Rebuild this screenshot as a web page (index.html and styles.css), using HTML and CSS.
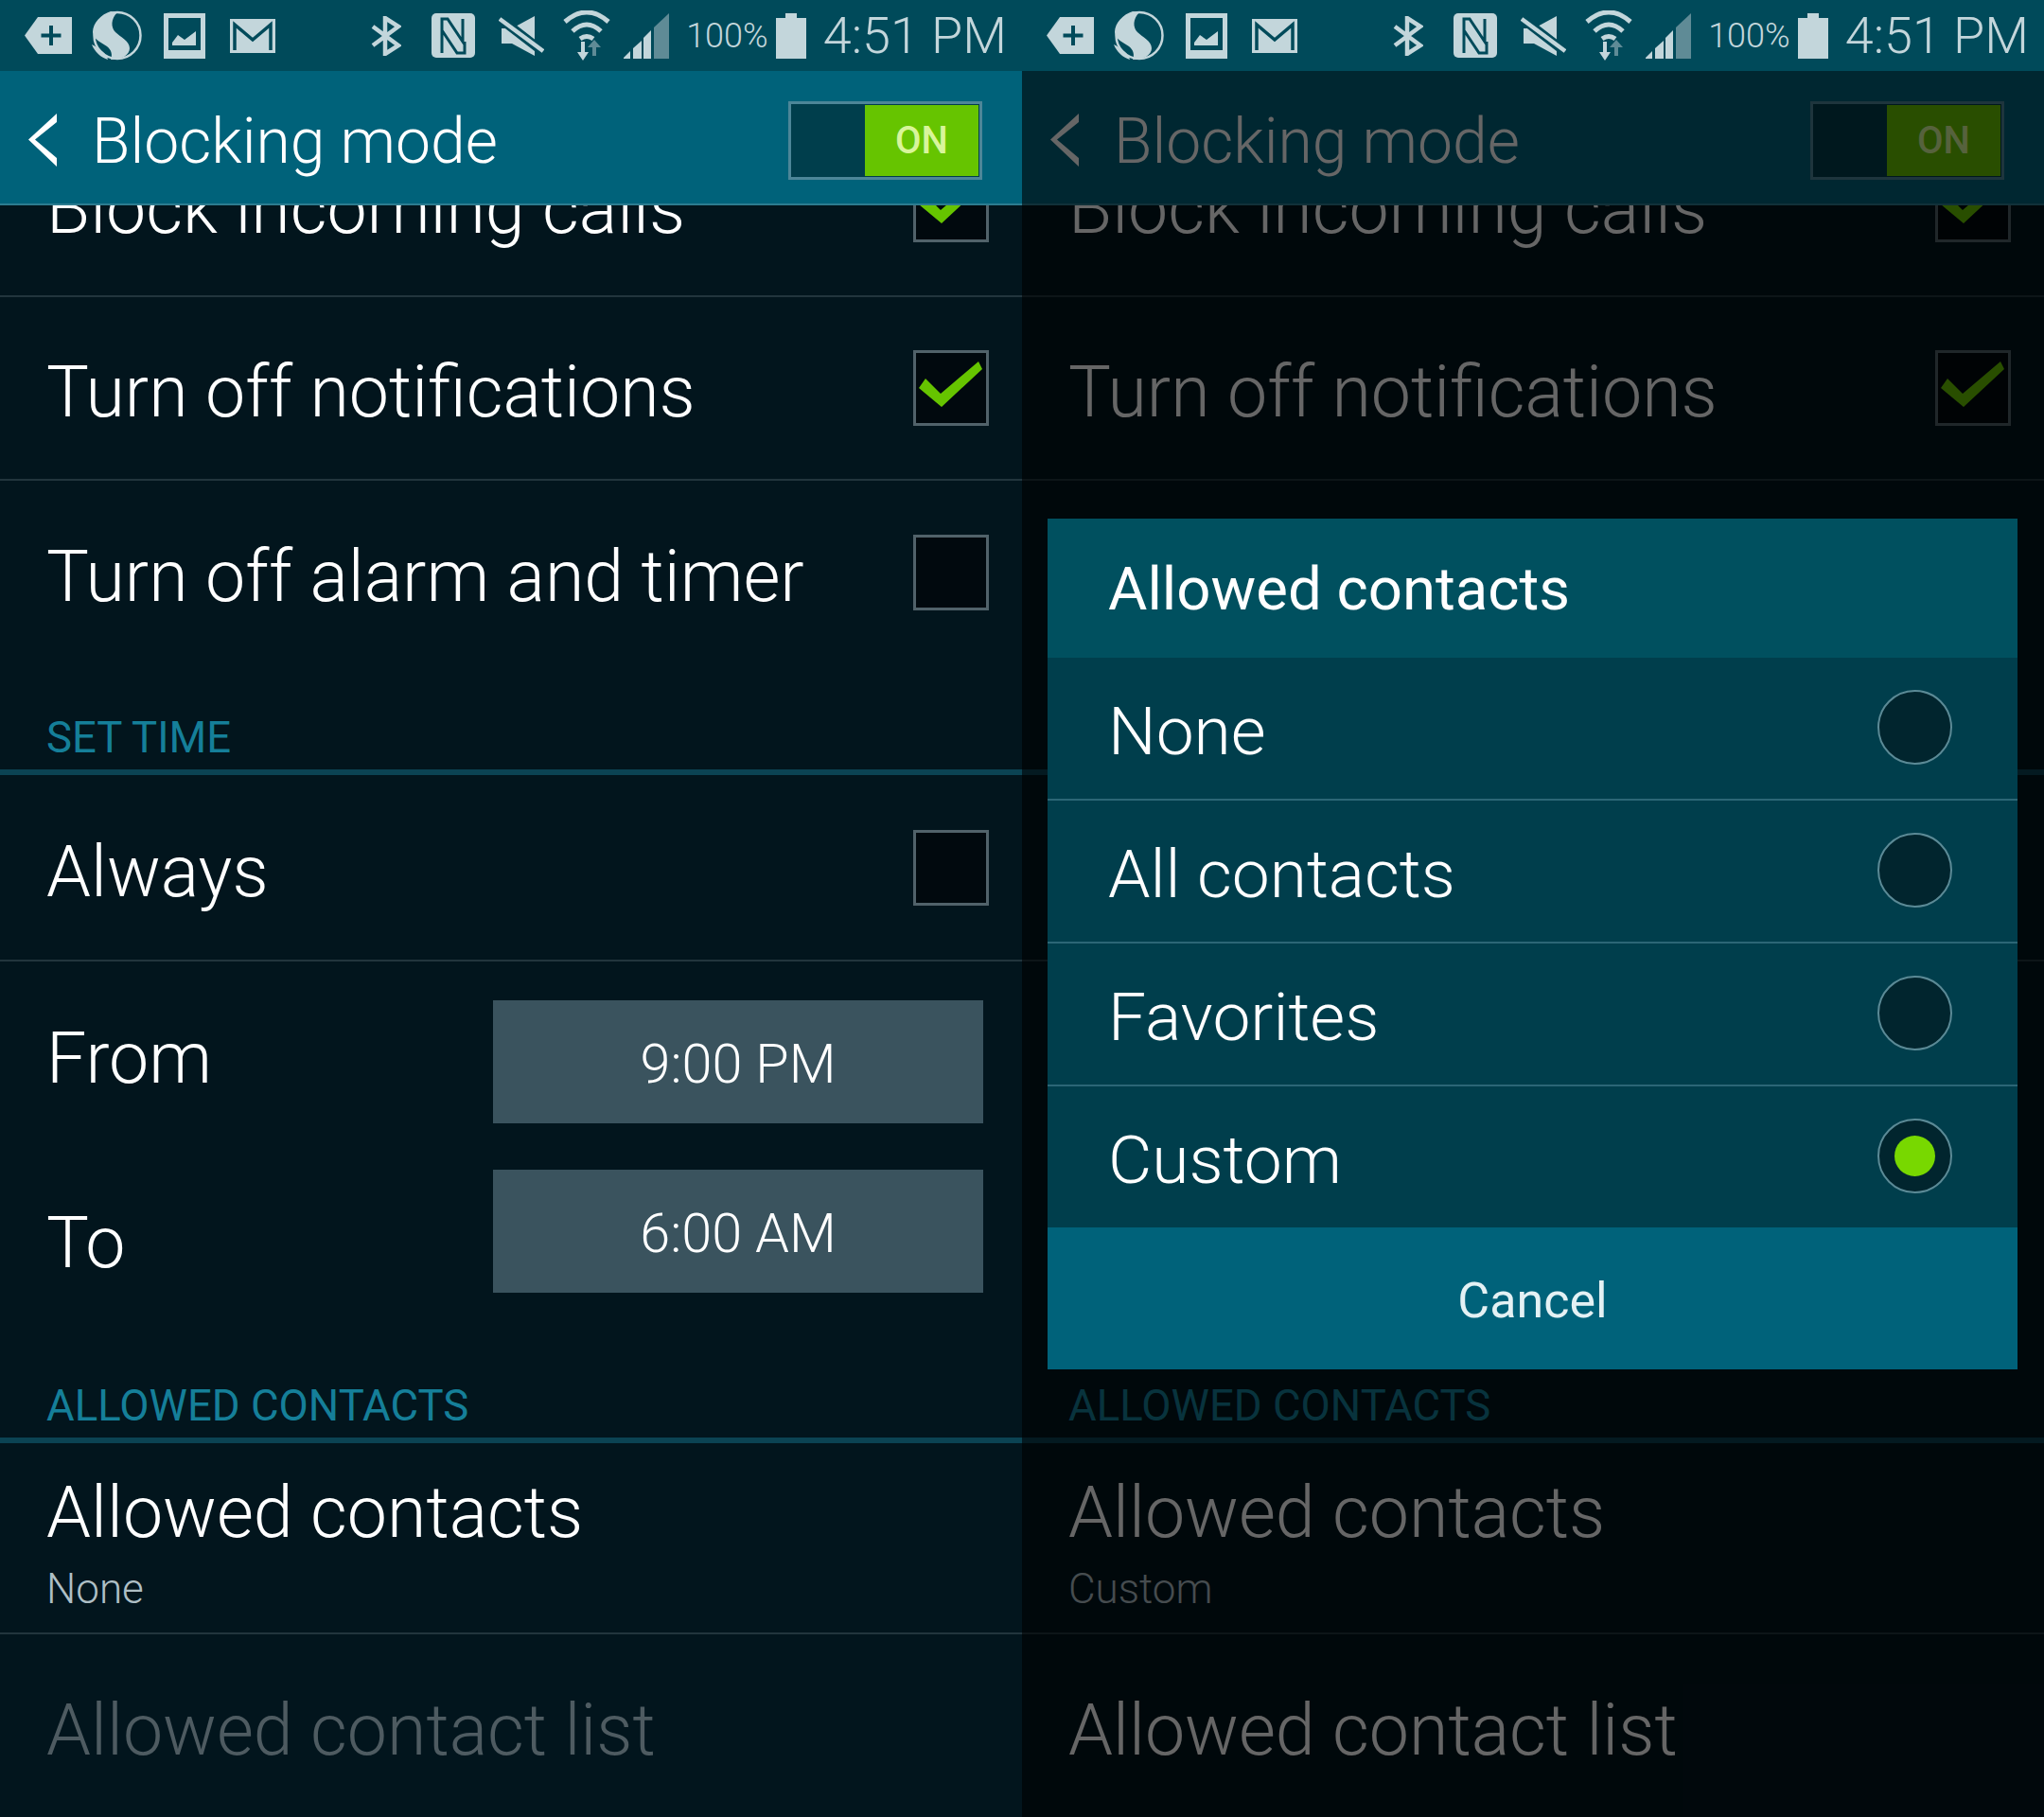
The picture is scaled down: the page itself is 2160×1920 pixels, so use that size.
FILE: index.html
```html
<!DOCTYPE html>
<html lang="en">
<head>
  <meta charset="UTF-8" />
  <title>Blocking mode</title>
  <link rel="stylesheet" href="styles.css">
</head>
<body>

  <!-- status bar icons, used by both phones -->
  <svg class="defs" xmlns="http://www.w3.org/2000/svg">
    <symbol id="i-tag" viewBox="0 0 50 39">
      <path d="M14 0H50V39H14L0 19.5Z" fill="currentColor"/>
      <path d="M26 9h4v8.500h8.500v4H30V30h-4v-8.500h-8.500v-4H26Z" fill="#004a5a"/>
    </symbol>
    <symbol id="i-swirl" viewBox="0 0 53 53">
      <circle cx="27" cy="26.500" r="24.500" fill="none" stroke="currentColor" stroke-width="2.500"/>
      <path d="M20 1C10 4 1 13 1 23C2 31 10 34 16 38C21 42 22 47 20 52C32 52 40 47 40 40C40 32 30 28 25 23C20 18 20 9 27 2Z" fill="currentColor"/>
      <path d="M0 36C3 44 10 50 17 52C16 46 8 40 0 36Z" fill="currentColor"/>
    </symbol>
    <symbol id="i-picture" viewBox="0 0 44 48">
      <path fill-rule="evenodd" d="M0 0H44V48H0ZM5 5V39H39V5Z" fill="currentColor"/>
      <path d="M9 34V31L15 23L22 28L34 19V34Z" fill="currentColor"/>
    </symbol>
    <symbol id="i-mail" viewBox="0 0 48 36">
      <rect width="48" height="36" fill="currentColor"/>
      <path d="M5 33V6L24 22L43 6V33" fill="none" stroke="#004a5a" stroke-width="3.500"/>
    </symbol>
    <symbol id="i-bt" viewBox="0 0 33 42">
      <path d="M3 11L30 31L16 40V2L30 11L3 31" fill="none" stroke="currentColor" stroke-width="4.500"/>
    </symbol>
    <symbol id="i-nfc" viewBox="0 0 46 47">
      <rect width="46" height="47" rx="5" fill="currentColor"/>
      <path d="M11 42V6H17L33 30V6M11 18L27 42H35V30" fill="none" stroke="#004a5a" stroke-width="3"/>
    </symbol>
    <symbol id="i-mute" viewBox="0 0 48 42">
      <path d="M3 13H14L38 0V42L14 29H3Z" fill="currentColor"/>
      <path d="M-2 0L50 40" stroke="#004a5a" stroke-width="10"/>
      <path d="M1 3L47 37" stroke="currentColor" stroke-width="4.500"/>
    </symbol>
    <symbol id="i-wifi" viewBox="0 0 50 53">
      <path d="M2 12Q25 -8 48 12M10 22Q25 8 40 22M18 30Q25 25 32 30" fill="none" stroke="currentColor" stroke-width="5"/>
      <path d="M19 33h4v11h4l-6 9-6-9h4Z" fill="currentColor"/>
      <path d="M31 48h4V39h5l-7-8-7 8h5Z" fill="#5f8b96"/>
    </symbol>
    <symbol id="i-signal" viewBox="0 0 49 48">
      <path d="M0 47L7 40V48H0Z" fill="currentColor"/>
      <path d="M10 37L19 29V48H10Z" fill="currentColor"/>
      <path d="M21 26L29 18V48H21Z" fill="currentColor"/>
      <path d="M32 15L48 0V48H32Z" fill="#5f8b96"/>
    </symbol>
    <symbol id="i-battery" viewBox="0 0 32 48">
      <path d="M10 0H22V5H32V48H0V5H10Z" fill="currentColor"/>
    </symbol>
    <symbol id="i-tick" viewBox="0 0 80 80">
      <path d="M6 40L13 30L29 46L69 12L73 20L30 60Z" fill="#66c400"/>
    </symbol>
  </svg>

  <div class="screens">

    <section class="phone">
      <div class="status">
        <div class="status-left">
          <svg class="ic ic-tag"><use href="#i-tag"/></svg>
          <svg class="ic ic-swirl"><use href="#i-swirl"/></svg>
          <svg class="ic ic-picture"><use href="#i-picture"/></svg>
          <svg class="ic ic-mail"><use href="#i-mail"/></svg>
        </div>
        <div class="status-right">
          <svg class="ic ic-bt"><use href="#i-bt"/></svg>
          <svg class="ic ic-nfc"><use href="#i-nfc"/></svg>
          <svg class="ic ic-mute"><use href="#i-mute"/></svg>
          <svg class="ic ic-wifi"><use href="#i-wifi"/></svg>
          <svg class="ic ic-signal"><use href="#i-signal"/></svg>
          <span class="percent">100%</span>
          <svg class="ic ic-battery"><use href="#i-battery"/></svg>
          <span class="clock">4:51 PM</span>
        </div>
      </div>

      <header class="appbar">
        <svg class="back" viewBox="0 0 30 56"><path d="M30 0V9L7 27.500L30 47V56L0 27.500Z" fill="currentColor"/></svg>
        <h1>Blocking mode</h1>
        <div class="toggle"><span class="toggle-on">ON</span></div>
      </header>

      <div class="list">
        <div class="row row-clipped">
          <span class="label">Block incoming calls</span>
          <span class="check"><svg><use href="#i-tick"/></svg></span>
        </div>
        <div class="row">
          <span class="label">Turn off notifications</span>
          <span class="check"><svg><use href="#i-tick"/></svg></span>
        </div>
        <div class="row row-last">
          <span class="label">Turn off alarm and timer</span>
          <span class="check"></span>
        </div>

        <h2 class="section section-time">SET TIME</h2>
        <div class="row row-always">
          <span class="label">Always</span>
          <span class="check"></span>
        </div>
        <div class="times">
          <div class="time-row">
            <span class="label label-from">From</span>
            <span class="time-btn">9:00 PM</span>
          </div>
          <div class="time-row">
            <span class="label label-to">To</span>
            <span class="time-btn">6:00 AM</span>
          </div>
        </div>

        <h2 class="section section-contacts">ALLOWED CONTACTS</h2>
        <div class="row row-tall">
          <span class="label">Allowed contacts</span>
          <span class="sub">None</span>
        </div>
        <div class="row row-last">
          <span class="label is-disabled">Allowed contact list</span>
        </div>
      </div>
    </section>

    <section class="phone">
      <div class="status">
        <div class="status-left">
          <svg class="ic ic-tag"><use href="#i-tag"/></svg>
          <svg class="ic ic-swirl"><use href="#i-swirl"/></svg>
          <svg class="ic ic-picture"><use href="#i-picture"/></svg>
          <svg class="ic ic-mail"><use href="#i-mail"/></svg>
        </div>
        <div class="status-right">
          <svg class="ic ic-bt"><use href="#i-bt"/></svg>
          <svg class="ic ic-nfc"><use href="#i-nfc"/></svg>
          <svg class="ic ic-mute"><use href="#i-mute"/></svg>
          <svg class="ic ic-wifi"><use href="#i-wifi"/></svg>
          <svg class="ic ic-signal"><use href="#i-signal"/></svg>
          <span class="percent">100%</span>
          <svg class="ic ic-battery"><use href="#i-battery"/></svg>
          <span class="clock">4:51 PM</span>
        </div>
      </div>

      <header class="appbar">
        <svg class="back" viewBox="0 0 30 56"><path d="M30 0V9L7 27.500L30 47V56L0 27.500Z" fill="currentColor"/></svg>
        <h1>Blocking mode</h1>
        <div class="toggle"><span class="toggle-on">ON</span></div>
      </header>

      <div class="list">
        <div class="row row-clipped">
          <span class="label">Block incoming calls</span>
          <span class="check"><svg><use href="#i-tick"/></svg></span>
        </div>
        <div class="row">
          <span class="label">Turn off notifications</span>
          <span class="check"><svg><use href="#i-tick"/></svg></span>
        </div>
        <div class="row row-last">
          <span class="label">Turn off alarm and timer</span>
          <span class="check"></span>
        </div>

        <h2 class="section section-time">SET TIME</h2>
        <div class="row row-always">
          <span class="label">Always</span>
          <span class="check"></span>
        </div>
        <div class="times">
          <div class="time-row">
            <span class="label label-from">From</span>
            <span class="time-btn">9:00 PM</span>
          </div>
          <div class="time-row">
            <span class="label label-to">To</span>
            <span class="time-btn">6:00 AM</span>
          </div>
        </div>

        <h2 class="section section-contacts">ALLOWED CONTACTS</h2>
        <div class="row row-tall">
          <span class="label">Allowed contacts</span>
          <span class="sub">Custom</span>
        </div>
        <div class="row row-last">
          <span class="label">Allowed contact list</span>
        </div>
      </div>

      <div class="scrim">
        <div class="dialog">
          <div class="dialog-title">Allowed contacts</div>
          <div class="option"><span class="option-text">None</span><span class="radio"></span></div>
          <div class="option"><span class="option-text">All contacts</span><span class="radio"></span></div>
          <div class="option"><span class="option-text">Favorites</span><span class="radio"></span></div>
          <div class="option"><span class="option-text">Custom</span><span class="radio radio-on"></span></div>
          <div class="dialog-cancel">Cancel</div>
        </div>
      </div>
    </section>

  </div>

</body>
</html>
```

FILE: styles.css
```css
body {
  margin: 0;
  background: #02151d;
  font-family: Roboto, sans-serif;
  font-weight: 300;
  color: #fff;
}

.defs {
  display: none;
}

.screens {
  display: grid;
  grid-template-columns: 1080px 1080px;
  width: 2160px;
  height: 1920px;
}

.phone {
  position: relative;
  display: flex;
  flex-direction: column;
  height: 1920px;
  overflow: hidden;
}

/* status bar */
.status {
  display: flex;
  justify-content: space-between;
  align-items: center;
  flex: none;
  height: 75px;
  padding: 0 16px 0 26px;
  background: #004a5a;
  color: #c3d6db;
}

.status-left,
.status-right {
  display: flex;
  align-items: center;
}

.ic {
  display: block;
  flex: none;
}

.ic-tag { width: 50px; height: 39px; margin-right: 21px; }
.ic-swirl { width: 53px; height: 53px; margin-right: 23px; }
.ic-picture { width: 44px; height: 48px; margin-right: 26px; }
.ic-mail { width: 48px; height: 36px; }
.ic-bt { width: 33px; height: 42px; margin-right: 32px; }
.ic-nfc { width: 46px; height: 47px; margin-right: 25px; }
.ic-mute { width: 48px; height: 42px; margin-right: 20px; }
.ic-wifi { width: 50px; height: 53px; margin-right: 14px; }
.ic-signal { width: 49px; height: 48px; margin-right: 17px; }
.ic-battery { width: 32px; height: 48px; margin: 0 18px 0 8px; }

.percent {
  font-size: 36px;
}

.clock {
  font-size: 54px;
}

/* action bar */
.appbar {
  display: flex;
  align-items: center;
  flex: none;
  height: 134px;
  padding: 6px 42px 0 30px;
  background: #00627a;
  border-bottom: 2px solid #2c7c90;
  z-index: 1;
}

.back {
  width: 30px;
  height: 56px;
  margin-right: 37px;
  color: #fff;
}

.appbar h1 {
  flex: 1;
  margin: 0;
  padding-top: 2px;
  font-size: 66px;
  font-weight: 300;
}

.toggle {
  display: flex;
  justify-content: flex-end;
  width: 197px;
  height: 75px;
  padding: 1px;
  background: #003e4c;
  border: 3px solid #4d8698;
}

.toggle-on {
  display: flex;
  justify-content: center;
  align-items: center;
  width: 120px;
  background: #66c400;
  color: #d8f59a;
  font-size: 40px;
  font-weight: 500;
}

/* settings list */
.list {
  flex: 1;
  overflow: hidden;
}

.row {
  display: flex;
  justify-content: space-between;
  align-items: center;
  box-sizing: border-box;
  height: 194px;
  padding: 0 35px 0 49px;
  border-bottom: 2px solid #22353d;
}

.row-clipped {
  margin-top: -97px;
}

.row-last {
  border-bottom: none;
}

.row-always {
  height: 197px;
}

.row-tall {
  flex-direction: column;
  justify-content: center;
  align-items: flex-start;
  height: 202px;
}

.label {
  padding-top: 8px;
  font-size: 75.3px;
}

.is-disabled {
  color: #4e5b61;
}

.sub {
  margin-top: 11px;
  font-size: 44px;
  color: #aebfc5;
}

.check {
  box-sizing: border-box;
  width: 80px;
  height: 80px;
  flex: none;
  background: #01090e;
  border: 3px solid #51626a;
}

.check svg {
  display: block;
  width: 80px;
  height: 80px;
  margin: -3px;
}

.section {
  display: flex;
  align-items: flex-end;
  box-sizing: border-box;
  margin: 0;
  padding: 0 49px 7px;
  font-size: 45.500px;
  font-weight: 400;
  color: #157f99;
  border-bottom: 6px solid #0b4353;
}

.section-time {
  height: 117px;
}

.section-contacts {
  height: 159px;
}

/* from / to pickers */
.times {
  display: flex;
  flex-direction: column;
  gap: 49px;
  padding: 41px 41px 0 49px;
}

.time-row {
  display: flex;
  justify-content: space-between;
  align-items: center;
}

.label-from {
  margin-bottom: 17px;
}

.label-to {
  margin-top: 15px;
}

.time-btn {
  display: flex;
  justify-content: center;
  align-items: center;
  box-sizing: border-box;
  width: 518px;
  height: 130px;
  padding-top: 4px;
  background: #3a535e;
  font-size: 57.500px;
}

/* dialog on the second phone */
.scrim {
  position: absolute;
  top: 75px;
  left: 0;
  right: 0;
  bottom: 0;
  z-index: 2;
  background: rgba(0, 0, 0, 0.6);
  padding: 473px 28px 0 27px;
}

.dialog {
  background: #003e4c;
}

.dialog-title {
  display: flex;
  align-items: center;
  box-sizing: border-box;
  height: 147px;
  padding: 2px 64px 0;
  background: #00505f;
  font-size: 63.500px;
  font-weight: 400;
}

.option {
  display: flex;
  justify-content: space-between;
  align-items: center;
  box-sizing: border-box;
  height: 151px;
  padding: 0 69px 2px 64px;
  font-size: 71.300px;
  border-bottom: 2px solid #2c6676;
}

.option:nth-last-child(2) {
  border-bottom: none;
  height: 149px;
}

.option-text {
  padding-top: 7px;
}

.radio {
  box-sizing: border-box;
  display: flex;
  justify-content: center;
  align-items: center;
  width: 79px;
  height: 79px;
  background: #01252e;
  border: 2px solid #5b8a96;
  border-radius: 50%;
}

.radio-on::after {
  content: "";
  width: 43px;
  height: 43px;
  background: #78d800;
  border-radius: 50%;
}

.dialog-cancel {
  display: flex;
  justify-content: center;
  align-items: center;
  box-sizing: border-box;
  height: 150px;
  padding-top: 4px;
  background: #00627a;
  font-size: 52px;
  font-weight: 400;
  color: #e4f1f4;
}
```
